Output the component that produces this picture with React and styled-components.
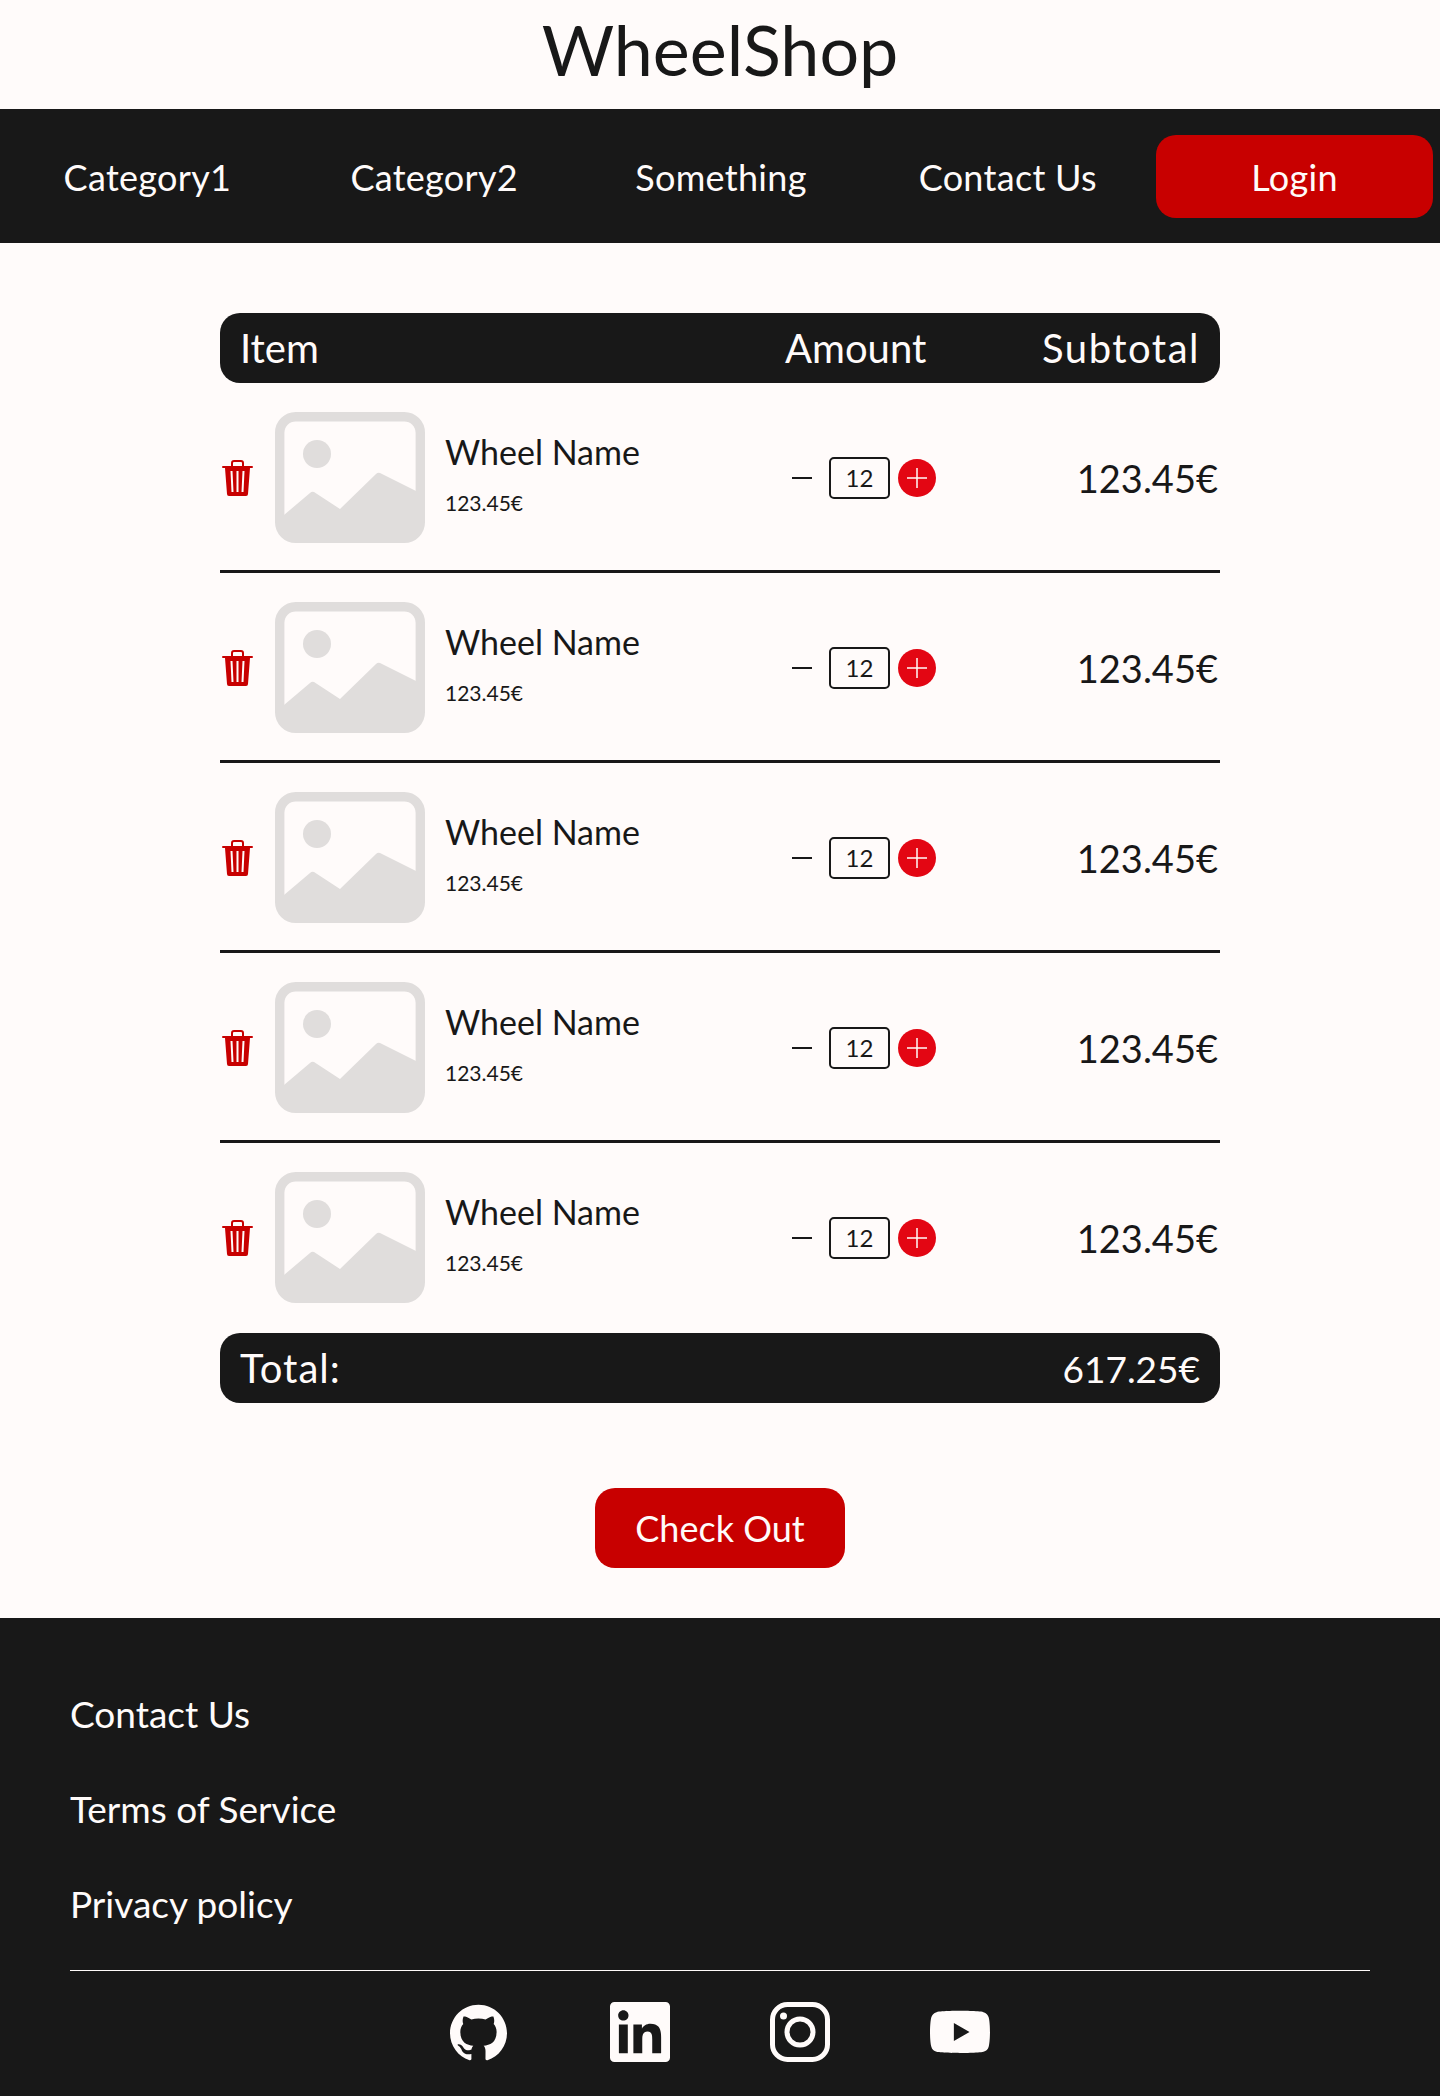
import React from "react";
import styled, { createGlobalStyle } from "styled-components";
import { SiGithub, SiLinkedin, SiYoutube } from "react-icons/si";

const GlobalStyle = createGlobalStyle`
  body {
    margin: 0;
    background: #fffbfa;
    color: #181818;
    font-family: "Lato", "Liberation Sans", sans-serif;
  }
`;

const Logo = styled.h1`
  margin: 0;
  height: 109px;
  box-sizing: border-box;
  padding-bottom: 12px;
  display: flex;
  align-items: center;
  justify-content: center;
  font-size: 70px;
  font-weight: 400;
  line-height: 1;
`;

const Nav = styled.nav`
  height: 134px;
  background: #181818;
  display: grid;
  grid-template-columns: repeat(5, 1fr);
  padding: 0 2px 0 4px;
  align-items: center;
  justify-items: center;
`;

const NavLink = styled.a`
  color: #fffbfa;
  font-size: 36px;
  letter-spacing: 0.3px;
  padding-top: 2px;
`;

const LoginButton = styled.button`
  width: 277px;
  height: 83px;
  border: 0;
  border-radius: 20px;
  background: #c80000;
  color: #fffbfa;
  font: inherit;
  font-size: 36px;
  letter-spacing: 0.3px;
  padding-top: 2px;
`;

const Main = styled.main`
  width: 1000px;
  margin: 0 auto;
  padding-top: 70px;
`;

const Bar = styled.div`
  height: 70px;
  box-sizing: border-box;
  padding: 0 20px;
  border-radius: 20px;
  background: #181818;
  color: #fffbfa;
  font-size: 40px;
  display: grid;
  grid-template-columns: ${(p) => (p.$total ? "1fr auto" : "1fr 290px 190px")};
  align-items: center;
`;

const BarAmount = styled.span`
  padding-left: 65px;
`;

const BarRight = styled.span`
  text-align: right;
  font-size: ${(p) => p.$size || 40}px;
  letter-spacing: ${(p) => p.$spacing || 0}px;
`;

const TotalLabel = styled.span`
  letter-spacing: 1px;
`;

const Row = styled.div`
  height: ${(p) => (p.$last ? 190 : 190)}px;
  box-sizing: border-box;
  padding: 29px 0 27px;
  border-bottom: 3px solid ${(p) => (p.$last ? "transparent" : "#181818")};
  display: grid;
  grid-template-columns: 55px 150px 1fr 228px 200px;
  align-items: center;
`;

const TrashCell = styled.div`
  padding-left: 2px;
  display: flex;
`;

const NameBlock = styled.div`
  padding: 0 0 10px 20px;
`;

const WheelName = styled.div`
  font-size: 34px;
  line-height: 42px;
`;

const UnitPrice = styled.div`
  margin-top: 18px;
  font-size: 21px;
  line-height: 24px;
`;

const AmountCell = styled.div`
  display: flex;
  align-items: center;
`;

const Minus = styled.span`
  width: 20px;
  height: 2px;
  margin-right: 17px;
  background: #181818;
`;

const AmountBox = styled.div`
  width: 61px;
  height: 42px;
  box-sizing: border-box;
  border: 2px solid #181818;
  border-radius: 5px;
  display: flex;
  align-items: center;
  justify-content: center;
  font-size: 24px;
`;

const Plus = styled.button`
  width: 38px;
  height: 38px;
  margin-left: 8px;
  padding: 0;
  border: 0;
  border-radius: 50%;
  background: #e30613;
  display: flex;
  align-items: center;
  justify-content: center;
`;

const Subtotal = styled.div`
  font-size: 38px;
  text-align: right;
  padding-right: 2px;
`;

const Checkout = styled.button`
  display: block;
  width: 250px;
  height: 80px;
  margin: 85px auto 50px;
  border: 0;
  border-radius: 20px;
  background: #c80000;
  color: #fffbfa;
  font: inherit;
  font-size: 36px;
`;

const Footer = styled.footer`
  height: 478px;
  box-sizing: border-box;
  padding: 0 70px;
  background: #181818;
  color: #fffbfa;
`;

const FooterLinks = styled.div`
  height: 353px;
  box-sizing: border-box;
  padding-top: 73px;
  border-bottom: 1px solid #fffbfa;
  display: flex;
  flex-direction: column;
  gap: 49px;
`;

const FooterLink = styled.a`
  font-size: 37px;
  line-height: 46px;
`;

const Socials = styled.div`
  display: flex;
  justify-content: center;
  gap: 100px;
  padding-top: 31px;
`;

const Social = styled.span`
  width: 60px;
  height: 60px;
  display: flex;
  align-items: center;
`;

const TrashIcon = () => (
  <svg width="31" height="36" viewBox="0 0 31 36">
    <path fill="none" stroke="#c80000" strokeWidth="2" d="M10 7V3q0-2 2-2h7q2 0 2 2v4" />
    <rect y="6" width="31" height="2" rx="1" fill="#c80000" />
    <path fill="#c80000" d="M3 8h25l-2 26q0 2-2 2H7q-2 0-2-2z" />
    <path stroke="#fffbfa" strokeWidth="2" d="M9.500 11l1 21M15.500 11v21M21.500 11l-1 21" />
  </svg>
);

const PlaceholderImage = () => (
  <svg width="150" height="131" viewBox="0 0 150 131">
    <rect x="4.700" y="4.700" width="140.600" height="121.600" rx="16" fill="none" stroke="#e0dddc" strokeWidth="9.400" />
    <circle cx="42" cy="42" r="14" fill="#e0dddc" />
    <path fill="#e0dddc" d="M9 103L35 81q2-2 4-1L65 97l36-35q2-2 4-1l36 18v36q0 7-7 7H16q-7 0-7-7z" />
  </svg>
);

const PlusIcon = () => (
  <svg width="20" height="20" viewBox="0 0 20 20">
    <path stroke="#fffbfa" strokeWidth="1.500" d="M0 10h20M10 0v20" />
  </svg>
);

const InstagramIcon = () => (
  <svg width="60" height="60" viewBox="0 0 60 60" fill="none" stroke="#fffbfa">
    <rect x="2.500" y="2.500" width="55" height="55" rx="15" strokeWidth="5" />
    <circle cx="30" cy="30" r="13" strokeWidth="5" />
    <circle cx="13.500" cy="14" r="3.500" fill="#fffbfa" stroke="none" />
  </svg>
);

const items = [1, 2, 3, 4, 5];

export default function App() {
  return (
    <>
      <GlobalStyle />
      <Logo>WheelShop</Logo>
      <Nav>
        <NavLink>Category1</NavLink>
        <NavLink>Category2</NavLink>
        <NavLink>Something</NavLink>
        <NavLink>Contact Us</NavLink>
        <LoginButton>Login</LoginButton>
      </Nav>
      <Main>
        <Bar>
          <span>Item</span>
          <BarAmount>Amount</BarAmount>
          <BarRight $spacing={1.5}>Subtotal</BarRight>
        </Bar>
        {items.map((item) => (
          <Row key={item} $last={item === items.length}>
            <TrashCell><TrashIcon /></TrashCell>
            <PlaceholderImage />
            <NameBlock>
              <WheelName>Wheel Name</WheelName>
              <UnitPrice>123.45€</UnitPrice>
            </NameBlock>
            <AmountCell>
              <Minus />
              <AmountBox>12</AmountBox>
              <Plus><PlusIcon /></Plus>
            </AmountCell>
            <Subtotal>123.45€</Subtotal>
          </Row>
        ))}
        <Bar $total>
          <TotalLabel>Total:</TotalLabel>
          <BarRight $size={37}>617.25€</BarRight>
        </Bar>
        <Checkout>Check Out</Checkout>
      </Main>
      <Footer>
        <FooterLinks>
          <FooterLink>Contact Us</FooterLink>
          <FooterLink>Terms of Service</FooterLink>
          <FooterLink>Privacy policy</FooterLink>
        </FooterLinks>
        <Socials>
          <Social><SiGithub size={57} /></Social>
          <Social><SiLinkedin size={60} /></Social>
          <Social><InstagramIcon /></Social>
          <Social><SiYoutube size={60} /></Social>
        </Socials>
      </Footer>
    </>
  );
}
